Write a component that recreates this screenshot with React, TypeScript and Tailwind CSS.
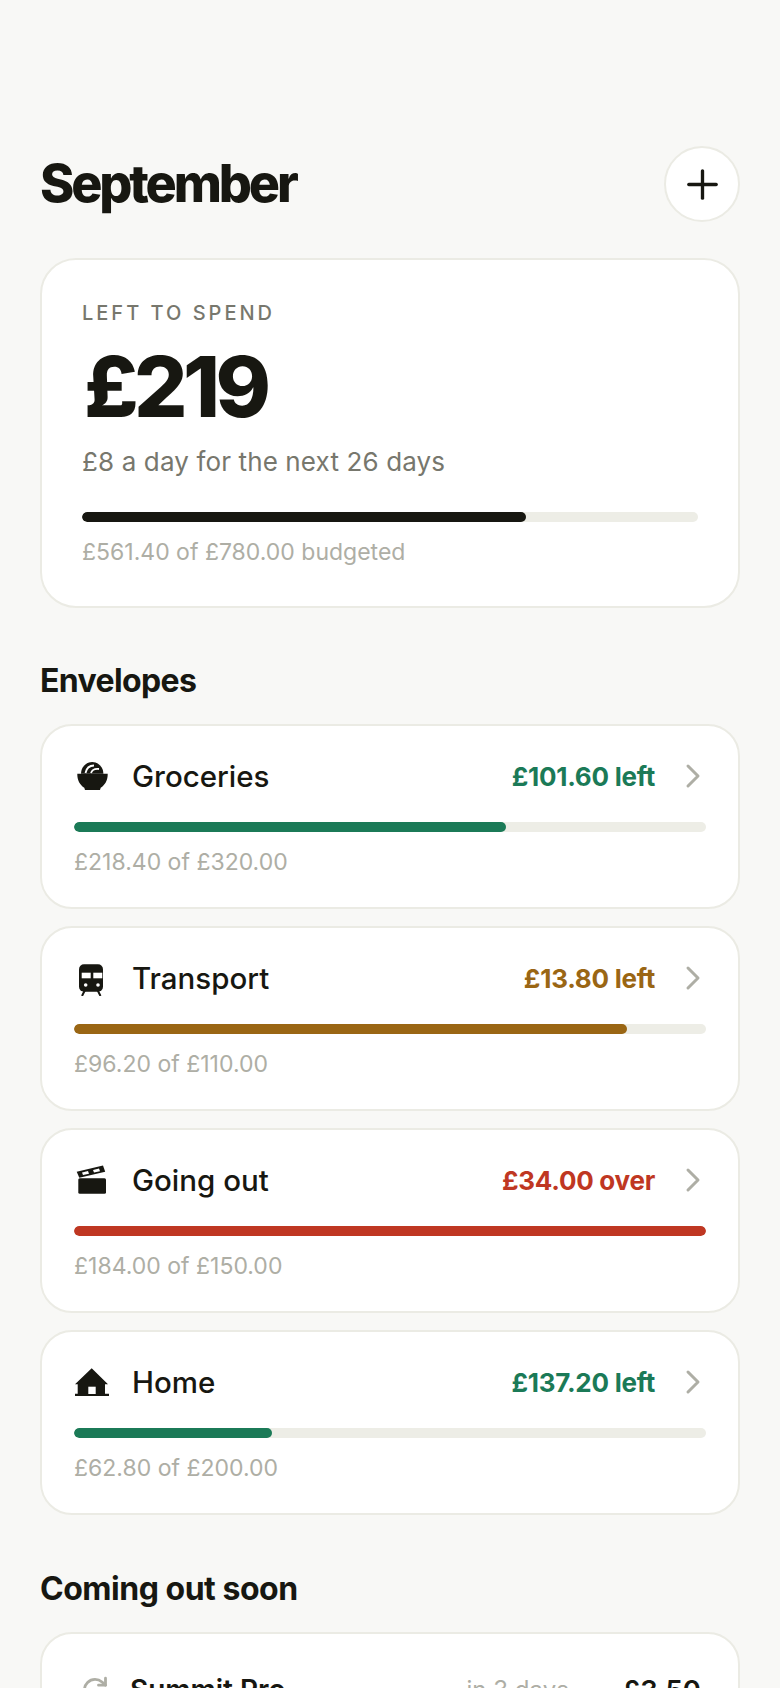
import { ChevronRight, Plus, Redo } from "lucide-react";

const BowlIcon = () => (
  <svg width="36" height="36" viewBox="1 0 36 36">
    <path d="M8 15.7a11.2 11.7 0 0 1 22.4 0z" fill="currentColor" />
    <path d="M4.3 15.7h30.4c.2 6.4-2.7 11.4-7 14l-.7 2.3H12l-.7-2.3c-4.300-2.600-7.200-7.600-7-14z" fill="currentColor" />
    <path d="M12.500 15C13.500 10 17 7.500 21 7.500M18 15c1-3 4-4.500 8-4" fill="none" stroke="#fff" strokeWidth="1.800" />
  </svg>
);

const TrainIcon = () => (
  <svg width="36" height="36" viewBox="1 0 36 36">
    <rect x="6" y="4.300" width="24" height="27.400" rx="5" fill="currentColor" />
    <rect x="8.700" y="12.700" width="9" height="5.600" fill="#fff" />
    <rect x="20.300" y="12.700" width="9" height="5.600" fill="#fff" />
    <circle cx="12.700" cy="25" r="1.800" fill="#fff" />
    <circle cx="25" cy="25" r="1.800" fill="#fff" />
    <path d="M12 30l-3 6M24.500 30l3 6" stroke="currentColor" strokeWidth="2" />
  </svg>
);

const ClapperIcon = () => (
  <svg width="36" height="36" viewBox="1 0 36 36">
    <path d="M3.700 9.700 30 3.500l2.200 6.300-25.900 5.900z" fill="currentColor" />
    <path d="M9 10.500l6-1.400 1 2.600-6 1.400zM20 8l6-1.400 1 2.600-6 1.400z" fill="#fff" />
    <rect x="5.300" y="16.200" width="27.700" height="15.500" rx="1.500" fill="currentColor" />
  </svg>
);

const HomeIcon = () => (
  <svg width="36" height="36" viewBox="1 0 36 36">
    <path d="M18.700 4.300 35 20.300h-3v9.400h4V32H2v-2.300h2.700v-9.400H2z" fill="currentColor" />
    <rect x="15.300" y="22.700" width="7.400" height="7.300" fill="#fff" />
  </svg>
);

const envelopes = [
  { icon: <BowlIcon />, name: "Groceries", status: "£101.60 left", color: "text-[#1b7a57]", bar: "bg-[#1b7a57]", pct: 68.3, spent: "£218.40 of £320.00" },
  { icon: <TrainIcon />, name: "Transport", status: "£13.80 left", color: "text-[#9a6614]", bar: "bg-[#9a6614]", pct: 87.5, spent: "£96.20 of £110.00" },
  { icon: <ClapperIcon />, name: "Going out", status: "£34.00 over", color: "text-[#bf3722]", bar: "bg-[#bf3722]", pct: 100, spent: "£184.00 of £150.00" },
  { icon: <HomeIcon />, name: "Home", status: "£137.20 left", color: "text-[#1b7a57]", bar: "bg-[#1b7a57]", pct: 31.4, spent: "£62.80 of £200.00" },
];

export default function App() {
  return (
    <div className="h-screen overflow-hidden bg-[#f8f8f6] px-10 pt-[146px] font-['Inter',sans-serif] text-[#171711]">
      <header className="flex items-center justify-between">
        <h1 className="text-[52px] leading-none font-extrabold tracking-[-0.06em]">September</h1>
        <button className="flex size-[76px] items-center justify-center rounded-full border-2 border-[#ebebe4] bg-white">
          <Plus size={47} strokeWidth={1.7} />
        </button>
      </header>

      <section className="mt-[36px] rounded-[36px] border-2 border-[#ebebe4] bg-white px-[40px] pt-[39px] pb-[38px]">
        <div className="text-[20px] leading-[28px] font-medium tracking-[0.15em] text-[#77776d]">LEFT TO SPEND</div>
        <div className="mt-[16px] ml-[2px] text-[84px] leading-[88px] font-extrabold tracking-[-0.055em]">£219</div>
        <div className="mt-[13px] text-[26px] leading-[36px] tracking-[0.005em] text-[#77776d]">£8 a day for the next 26 days</div>
        <div className="mt-[32px] h-[10px] overflow-hidden rounded-full bg-[#edede6]">
          <div className="h-full rounded-full bg-[#171711]" style={{ width: "72%" }} />
        </div>
        <div className="mt-[14px] text-[23px] leading-[32px] text-[#aeaea5]">£561.40 of £780.00 budgeted</div>
      </section>

      <h2 className="mt-[53px] text-[32px] leading-[40px] font-bold tracking-[-0.02em]">Envelopes</h2>
      <div className="mt-[23px] flex flex-col gap-[17px]">
        {envelopes.map((env) => (
          <div key={env.name} className="rounded-[32px] border-2 border-[#ebebe4] bg-white px-[32px] pt-[28px] pb-[29px]">
            <div className="flex items-center">
              <span className="w-[58px]">{env.icon}</span>
              <span className="flex-1 text-[29.500px] leading-[44px] font-[550]">{env.name}</span>
              <span className={`text-[26px] font-bold tracking-[-0.01em] ${env.color}`}>{env.status}</span>
              <ChevronRight className="ml-[18px] -mr-[7px] text-[#aeaea5]" size={40} strokeWidth={1.8} />
            </div>
            <div className="mt-[24px] h-[10px] overflow-hidden rounded-full bg-[#edede6]">
              <div className={`h-full rounded-full ${env.bar}`} style={{ width: `${env.pct}%` }} />
            </div>
            <div className="mt-[14px] text-[23px] leading-[32px] text-[#aeaea5]">{env.spent}</div>
          </div>
        ))}
      </div>

      <h2 className="mt-[54px] text-[32px] leading-[40px] font-bold tracking-[-0.015em]">Coming out soon</h2>
      <div className="mt-[23px] rounded-[32px] border-2 border-[#ebebe4] bg-white pr-[37px] pl-[40px] pt-[39px] pb-[40px]">
        <div className="flex items-center">
          <span className="w-[48px]">
            <Redo className="-ml-[1.5px] -translate-y-[6px] text-[#aeaea5]" size={28} strokeWidth={2.4} />
          </span>
          <span className="flex-1 text-[28px] leading-[34px] font-semibold">Summit Pro</span>
          <span className="text-[24px] leading-[34px] text-[#aeaea5]">in 3 days</span>
          <span className="ml-[54px] text-[27.5px] leading-[34px] font-semibold">£3.50</span>
        </div>
      </div>
    </div>
  );
}
